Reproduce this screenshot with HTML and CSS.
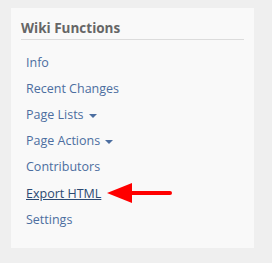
FILE: index.html
```html
<!DOCTYPE html>
<html lang="en">
<head>
    <meta charset="UTF-8">
    <title>Wiki Functions</title>
    <link rel="stylesheet" href="styles.css">
</head>
<body>
    <div class="panel">
        <h3 class="panel-title">Wiki Functions</h3>
        <ul class="menu">
            <li><a href="#">Info</a></li>
            <li><a href="#">Recent Changes</a></li>
            <li><a href="#">Page Lists <span class="caret"></span></a></li>
            <li><a href="#">Page Actions <span class="caret"></span></a></li>
            <li><a href="#">Contributors</a></li>
            <li class="marked">
                <a href="#" class="active">Export HTML</a>
                <svg class="arrow" width="66" height="22" viewBox="0 0 66 22">
                    <path d="M0 11 L25 1 L25 21 Z" fill="#f00"/>
                    <path d="M22 11 H63" stroke="#f00" stroke-width="4" stroke-linecap="round"/>
                </svg>
            </li>
            <li><a href="#">Settings</a></li>
        </ul>
    </div>
</body>
</html>
```

FILE: styles.css
```css
body {
    margin: 0;
    background-color: #efefef;
    font-family: 'Open Sans', sans-serif;
}

.panel {
    box-sizing: border-box;
    width: 243px;
    height: 240px;
    margin: 8px 0 0 11px;
    padding: 11px 10px 0 10px;
    background-color: #f9f9f9;
}

.panel-title {
    margin: 0;
    padding-bottom: 2px;
    border-bottom: 1px solid #dcdcdc;
    font-size: 13.5px;
    font-weight: 700;
    color: #666;
}

.menu {
    list-style: none;
    margin: 9px 0 0 0;
    padding: 0 0 0 5px;
}

.menu li {
    height: 26.2px;
    display: flex;
    align-items: center;
}

.menu a {
    font-size: 12.5px;
    color: #4c6ea0;
    text-decoration: none;
}

.menu a.active {
    color: #2c4a72;
    text-decoration: underline;
}

.caret {
    display: inline-block;
    width: 0;
    height: 0;
    margin-left: 2px;
    vertical-align: middle;
    border-top: 4px solid #4c6ea0;
    border-left: 4px solid transparent;
    border-right: 4px solid transparent;
}

.arrow {
    margin-left: 6px;
}
```
